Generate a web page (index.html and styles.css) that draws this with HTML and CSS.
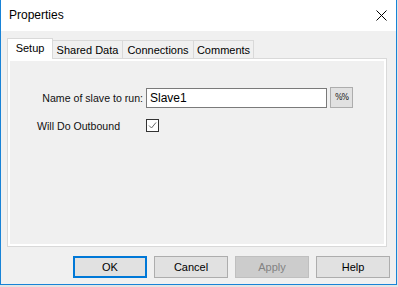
FILE: index.html
```html
<!DOCTYPE html>
<html lang="en">
<head>
  <meta charset="UTF-8" />
  <title>Properties</title>
  <link rel="stylesheet" href="styles.css">
</head>
<body>
  <div class="window">
    <div class="titlebar">
      <span class="title">Properties</span>
      <svg class="close" width="11" height="11" viewBox="0 0 11 11">
        <path d="M0.5 0.5 L10.5 10.5 M10.5 0.5 L0.5 10.5" stroke="#000" stroke-width="1" fill="none"/>
      </svg>
    </div>
    <div class="client">
      <div class="tabs">
        <div class="tab selected tab-setup">Setup</div>
        <div class="tab tab-shared">Shared Data</div>
        <div class="tab tab-conn">Connections</div>
        <div class="tab tab-comments">Comments</div>
      </div>
      <div class="pane">
        <div class="page">
          <div class="form">
            <label class="label-right">Name of slave to run:</label>
            <div class="field">
              <div class="textbox">Slave1</div>
              <div class="small-btn">%%</div>
            </div>
            <label class="label-left">Will Do Outbound</label>
            <div class="field">
              <div class="checkbox">
                <svg width="11" height="11" viewBox="0 0 11 11">
                  <path d="M2 5.5 L4.5 8 L9 2.5" stroke="#666" stroke-width="1" fill="none"/>
                </svg>
              </div>
            </div>
          </div>
        </div>
      </div>
      <div class="buttons">
        <div class="btn default">OK</div>
        <div class="btn">Cancel</div>
        <div class="btn disabled">Apply</div>
        <div class="btn">Help</div>
      </div>
    </div>
  </div>
</body>
</html>
```

FILE: styles.css
```css
body {
  margin: 0;
  background: #e4e4e4;
  font-family: 'Liberation Sans', Arial, sans-serif;
  font-size: 11px;
  color: #000;
}
.window {
  width: 395px;
  height: 284px;
  border-left: 1px solid #1883d7;
  border-right: 1px solid #1883d7;
  border-bottom: 1px solid #1883d7;
  display: flex;
  flex-direction: column;
}
.titlebar {
  height: 31px;
  background: #fff;
  display: flex;
  align-items: center;
  padding: 0 9px 0 8px;
}
.title {
  font-size: 12px;
  flex: 1;
  padding-bottom: 1px;
}
.close {
  margin-bottom: 1px;
}
.client {
  flex: 1;
  background: #f0f0f0;
  padding: 7px 6px 6px 6px;
  display: flex;
  flex-direction: column;
}
.tabs {
  display: flex;
  align-items: flex-end;
  height: 20px;
}
.tab {
  box-sizing: border-box;
  height: 18px;
  border: 1px solid #d9d9d9;
  border-bottom: none;
  background: #f0f0f0;
  display: flex;
  align-items: center;
  justify-content: center;
  margin-left: -1px;
  padding-top: 1px;
}
.tab.selected {
  height: 21px;
  margin-left: 0;
  margin-bottom: -1px;
  background: #fff;
  position: relative;
  z-index: 1;
  padding-top: 0;
  padding-bottom: 2px;
}
.tab-setup { width: 46px; }
.tab-shared { width: 71px; }
.tab-conn { width: 72px; }
.tab-comments { width: 61px; }
.pane {
  width: 380px;
  height: 189px;
  box-sizing: border-box;
  border: 1px solid #d9d9d9;
  background: #fff;
  padding: 2px;
  display: flex;
}
.page {
  flex: 1;
  background: #f0f0f0;
  padding: 26px 0 0 27px;
}
.form {
  display: grid;
  grid-template-columns: 106px auto;
  column-gap: 3px;
  row-gap: 11px;
  align-items: center;
}
.form label {
  font-size: 10.6px;
  color: #111;
}
.label-right {
  justify-self: end;
}
.label-left {
  justify-self: start;
}
.field {
  display: flex;
  align-items: center;
  gap: 3px;
}
.textbox {
  box-sizing: border-box;
  width: 181px;
  height: 20px;
  border: 1px solid #7a7a7a;
  background: #fff;
  padding: 0 3px;
  display: flex;
  align-items: center;
  font-size: 12px;
}
.small-btn {
  box-sizing: border-box;
  width: 23px;
  height: 21px;
  border: 1px solid #adadad;
  background: #e1e1e1;
  display: flex;
  align-items: center;
  justify-content: center;
  font-family: 'DejaVu Sans', sans-serif;
  font-size: 8px;
  letter-spacing: -1px;
  color: #222;
}
.checkbox {
  box-sizing: border-box;
  width: 13px;
  height: 13px;
  border: 1px solid #333;
  background: #fff;
  display: flex;
}
.buttons {
  margin-top: 9px;
  display: flex;
  justify-content: flex-end;
  gap: 7px;
}
.btn {
  box-sizing: border-box;
  width: 74px;
  height: 22px;
  border: 1px solid #adadad;
  background: #e1e1e1;
  display: flex;
  align-items: center;
  justify-content: center;
}
.btn.default {
  border: 2px solid #0078d7;
}
.btn.disabled {
  background: #cccccc;
  border-color: #bfbfbf;
  color: #838383;
}
```
